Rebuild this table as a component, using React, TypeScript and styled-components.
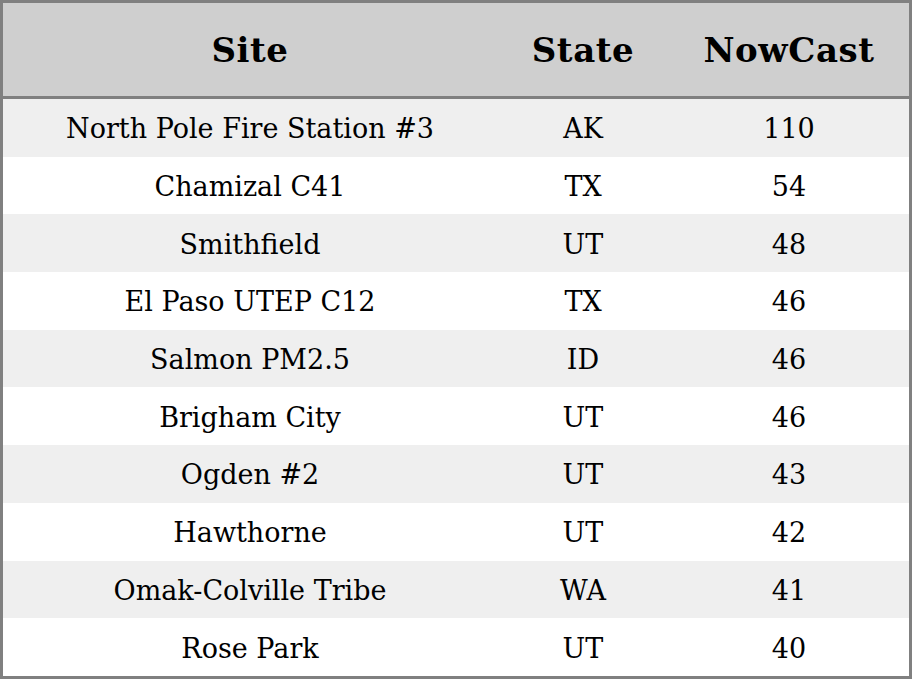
import React from "react";
import styled, { createGlobalStyle } from "styled-components";

const rows = [
  { site: "North Pole Fire Station #3", state: "AK", nowcast: 110 },
  { site: "Chamizal C41", state: "TX", nowcast: 54 },
  { site: "Smithfield", state: "UT", nowcast: 48 },
  { site: "El Paso UTEP C12", state: "TX", nowcast: 46 },
  { site: "Salmon PM2.5", state: "ID", nowcast: 46 },
  { site: "Brigham City", state: "UT", nowcast: 46 },
  { site: "Ogden #2", state: "UT", nowcast: 43 },
  { site: "Hawthorne", state: "UT", nowcast: 42 },
  { site: "Omak-Colville Tribe", state: "WA", nowcast: 41 },
  { site: "Rose Park", state: "UT", nowcast: 40 },
];

const GlobalStyle = createGlobalStyle`
  html, body {
    margin: 0;
    padding: 0;
    background: #ffffff;
  }
`;

const App = () => (
  <>
    <GlobalStyle />
    <Table>
      <colgroup>
        <col style={{ width: 494 }} />
        <col style={{ width: 172 }} />
        <col style={{ width: 240 }} />
      </colgroup>
      <thead>
        <HeadRow>
          <HeadCell>Site</HeadCell>
          <HeadCell>State</HeadCell>
          <HeadCell>NowCast</HeadCell>
        </HeadRow>
      </thead>
      <tbody>
        {rows.map((r, i) => (
          <Row key={r.site} striped={i % 2 === 0}>
            <Cell>{r.site}</Cell>
            <Cell>{r.state}</Cell>
            <Cell>{r.nowcast}</Cell>
          </Row>
        ))}
      </tbody>
    </Table>
  </>
);

const Table = styled.table`
  width: 912px;
  height: 679px;
  border-collapse: separate;
  border-spacing: 0;
  border: 3px solid #808080;
  box-sizing: border-box;
  table-layout: fixed;
  font-family: "DejaVu Serif", serif;
  color: #000;
`;
const HeadRow = styled.tr`
  height: 96px;
  background: #cfcfcf;
`;
const HeadCell = styled.th`
  padding: 0;
  text-align: center;
  vertical-align: middle;
  font-size: 34px;
  font-weight: bold;
  letter-spacing: 0.6px;
  border-bottom: 3px solid #808080;
`;
interface IRow {
  striped?: boolean
}
const Row = styled.tr.withConfig({
  shouldForwardProp: (prop) => prop !== "striped",
})<IRow>`
  height: 57.7px;
  background: ${(props) => (props.striped ? "#efefef" : "#ffffff")};
`;
const Cell = styled.td`
  padding: 2px 0 0 0;
  text-align: center;
  vertical-align: middle;
  font-size: 27px;
  line-height: 1;
`;
export default App;
